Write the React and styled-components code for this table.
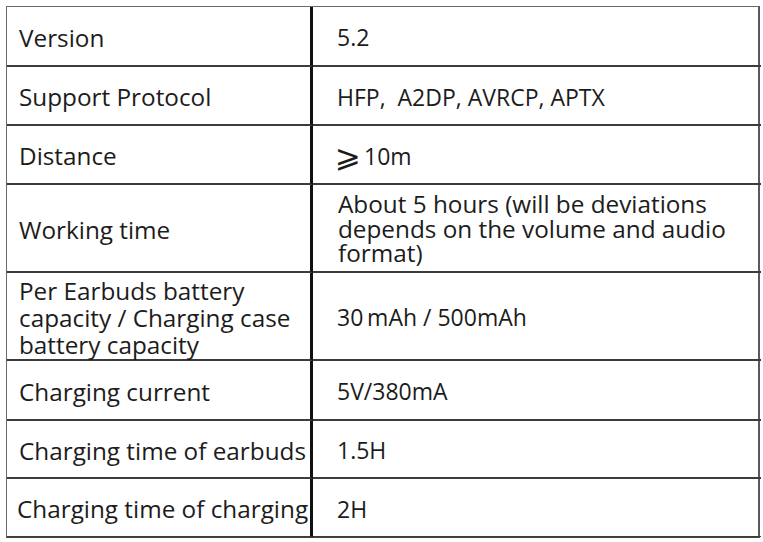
import React from 'react'
import styled, { createGlobalStyle } from 'styled-components'

const GlobalStyle = createGlobalStyle`
  html, body {
    margin: 0;
    padding: 0;
    background: #ffffff;
  }
  body {
    font-family: 'Open Sans', 'Liberation Sans', sans-serif;
    color: #1c1c1c;
  }
`

const Page = styled.div`
  padding: 6px 0 0 6px;
  width: 763px;
  height: 542px;
  box-sizing: border-box;
`

const Table = styled.div`
  display: grid;
  grid-template-columns: 306px 448px;
  width: 754px;
  border-top: 1px solid #6a6a6a;
  border-left: 1px solid #6a6a6a;
  border-right: 2px solid #5a5a5a;
  border-bottom: 1px solid #444;
  box-sizing: border-box;
`

const Cell = styled.div`
  display: flex;
  align-items: center;
  height: ${props => props.$h}px;
  box-sizing: border-box;
  border-bottom: ${props => (props.$last ? '1px' : '2px')} solid #3c3c3c;
`

const LabelCell = styled(Cell)`
  padding-left: ${props => (props.$shift ? '10px' : '12px')};
  padding-right: 2px;
  padding-top: 2px;
  border-right: 3px solid #111;
  font-size: 24.3px;
  line-height: 27px;
  white-space: ${props => (props.$shift ? 'nowrap' : 'normal')};
`

const ValueCell = styled(Cell)`
  padding-left: ${props => (props.$tight ? '25px' : '24px')};
  padding-right: 10px;
  padding-top: 2px;
  font-size: ${props => (props.$tight ? '24.3px' : '23px')};
  line-height: ${props => (props.$tight ? '24.5px' : '28px')};
`

const Sign = styled.span`
  font-family: 'DejaVu Sans', sans-serif;
  font-size: 31px;
  line-height: 28px;
  margin-left: -2px;
  margin-right: 3px;
`

const rows = [
  { label: 'Version', value: '5.2', height: 60 },
  { label: 'Support Protocol', value: 'HFP,\u00a0 A2DP, AVRCP, APTX', height: 59 },
  {
    label: 'Distance',
    value: (
      <>
        <Sign>⩾</Sign>10m
      </>
    ),
    height: 59
  },
  {
    label: 'Working time',
    value: 'About 5 hours (will be deviations depends on the volume and audio format)',
    height: 88,
    tight: true
  },
  {
    label: 'Per Earbuds battery capacity / Charging case battery capacity',
    value: '30\u2009mAh / 500mAh',
    height: 88
  },
  { label: 'Charging current', value: '5V/380mA', height: 60 },
  { label: 'Charging time of earbuds', value: '1.5H', height: 58 },
  { label: 'Charging time of charging', value: '2H', height: 58, shift: true }
]

const App = () => (
  <Page>
    <GlobalStyle />
    <Table>
      {rows.map((row, i) => (
        <React.Fragment key={row.label}>
          <LabelCell $h={row.height} $last={i === rows.length - 1} $shift={row.shift}>
            {row.label}
          </LabelCell>
          <ValueCell $h={row.height} $last={i === rows.length - 1} $tight={row.tight}>
            {row.value}
          </ValueCell>
        </React.Fragment>
      ))}
    </Table>
  </Page>
)

export default App
